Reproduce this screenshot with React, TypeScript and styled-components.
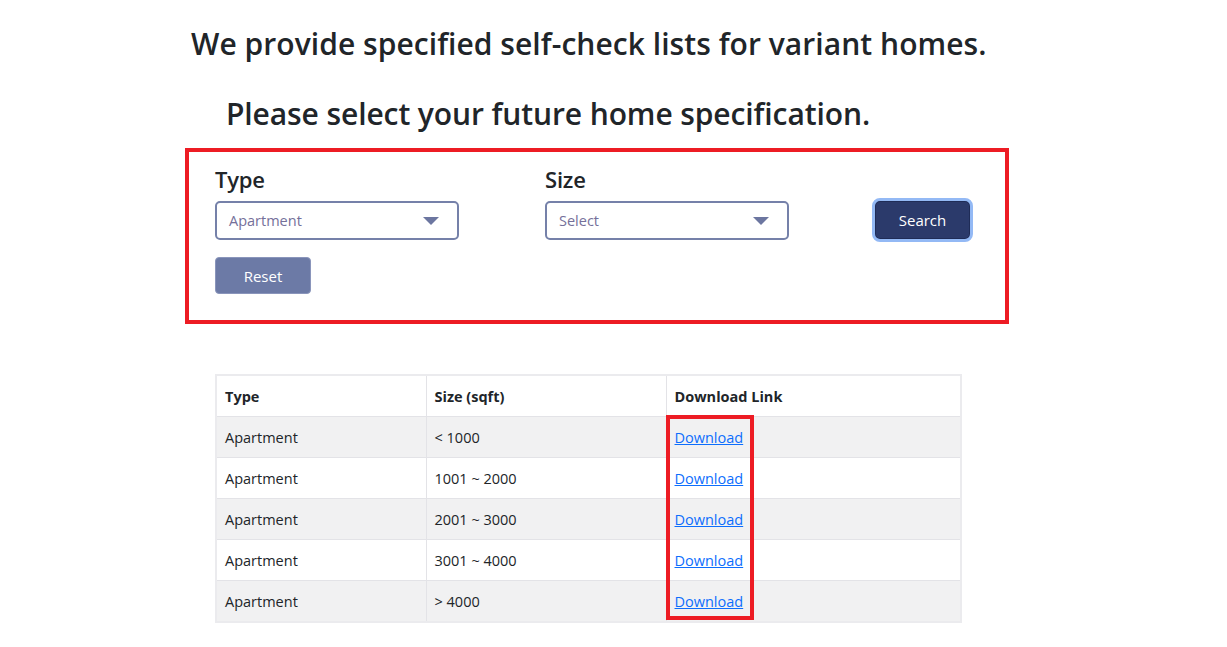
import React from "react";
import styled, { createGlobalStyle } from "styled-components";

const Global = createGlobalStyle`
  html, body { margin: 0; padding: 0; background: #fff; }
  body { font-family: "Open Sans", "Noto Sans", sans-serif; color: #212529; }
`;

const Page = styled.div`
  width: 1227px;
  height: 647px;
  overflow: hidden;
  padding-top: 24px;
  box-sizing: border-box;
`;

const Heading = styled.h1<{ $indent: number; $spacing: number }>`
  margin: 0 0 0 ${(p) => p.$indent}px;
  font-size: 30px;
  font-weight: 600;
  line-height: 40px;
  letter-spacing: ${(p) => p.$spacing}px;
  color: #212529;
  white-space: nowrap;
`;

const Headings = styled.div`
  display: flex;
  flex-direction: column;
  gap: 30px;
`;

const FilterPanel = styled.section`
  margin: 14px 0 0 185px;
  width: 824px;
  height: 176px;
  box-sizing: border-box;
  border: 4px solid #ed1c24;
  padding: 13px 26px 0;
  display: grid;
  grid-template-columns: 244px 86px 244px 83px 101px;
  grid-template-rows: auto auto;
  align-content: start;
  row-gap: 17px;
`;

const Field = styled.div<{ $col: number }>`
  grid-column: ${(p) => p.$col};
  grid-row: 1;
  display: flex;
  flex-direction: column;
  gap: 8px;
`;

const Label = styled.label`
  font-size: 22px;
  font-weight: 600;
  line-height: 28px;
  color: #212529;
  letter-spacing: -0.2px;
`;

const SelectBox = styled.div`
  height: 39px;
  box-sizing: border-box;
  border: 2px solid #7581a9;
  border-radius: 5px;
  display: flex;
  align-items: center;
  justify-content: space-between;
  padding: 0 18px 0 12px;
  font-size: 14.5px;
  color: #75709a;
`;

const Arrow = styled.span`
  width: 0;
  height: 0;
  border-left: 8px solid transparent;
  border-right: 8px solid transparent;
  border-top: 8px solid #6c76a0;
`;

const SearchCell = styled.div`
  grid-column: 5;
  grid-row: 1;
  align-self: end;
  display: flex;
  margin-bottom: -2px;
`;

const SearchButton = styled.button`
  width: 101px;
  height: 44px;
  box-sizing: border-box;
  border: 3px solid #93b9f5;
  border-radius: 8px;
  background: #2b3a6b;
  box-shadow: inset 0 0 0 1px #1f2c57;
  color: #fff;
  font-family: inherit;
  font-size: 15px;
  padding: 0;
`;

const ResetButton = styled.button`
  grid-column: 1;
  grid-row: 2;
  width: 96px;
  height: 37px;
  border: 1px solid #8a95bb;
  border-radius: 4px;
  background: #6c7aa6;
  color: #fff;
  font-family: inherit;
  font-size: 15px;
  padding: 0;
`;

const TableWrap = styled.div`
  position: relative;
  margin: 50px 0 0 215px;
  width: 745px;
`;

const Table = styled.table`
  width: 745px;
  border-collapse: collapse;
  font-size: 14.5px;
  border: 2px solid #ebebee;
  table-layout: fixed;
`;

const Th = styled.th`
  text-align: left;
  font-weight: 700;
  height: 40px;
  padding: 0 8px;
  border: 1px solid #e3e3e7;
  color: #212529;
`;

const Row = styled.tr<{ $odd: boolean }>`
  background: ${(p) => (p.$odd ? "#f1f1f2" : "#fff")};
`;

const Td = styled.td`
  height: 40px;
  padding: 0 8px;
  border: 1px solid #e3e3e7;
  color: #212529;
`;

const Link = styled.a`
  color: #0d6efd;
  text-decoration: underline;
`;

const LinkHighlight = styled.div`
  position: absolute;
  left: 451px;
  top: 41px;
  width: 88px;
  height: 205px;
  box-sizing: border-box;
  border: 4px solid #ed1c24;
  pointer-events: none;
`;

const rows = ["< 1000", "1001 ~ 2000", "2001 ~ 3000", "3001 ~ 4000", "> 4000"];

export default function App() {
  return (
    <Page>
      <Global />
      <Headings>
        <Heading $indent={191} $spacing={0.05}>
          We provide specified self-check lists for variant homes.
        </Heading>
        <Heading $indent={226} $spacing={-0.1}>
          Please select your future home specification.
        </Heading>
      </Headings>
      <FilterPanel>
        <Field $col={1}>
          <Label>Type</Label>
          <SelectBox>
            <span>Apartment</span>
            <Arrow />
          </SelectBox>
        </Field>
        <Field $col={3}>
          <Label>Size</Label>
          <SelectBox>
            <span>Select</span>
            <Arrow />
          </SelectBox>
        </Field>
        <SearchCell>
          <SearchButton>Search</SearchButton>
        </SearchCell>
        <ResetButton>Reset</ResetButton>
      </FilterPanel>
      <TableWrap>
        <Table>
          <colgroup>
            <col style={{ width: 210 }} />
            <col style={{ width: 240 }} />
            <col style={{ width: 295 }} />
          </colgroup>
          <thead>
            <tr>
              <Th>Type</Th>
              <Th>Size (sqft)</Th>
              <Th>Download Link</Th>
            </tr>
          </thead>
          <tbody>
            {rows.map((r, i) => (
              <Row key={r} $odd={i % 2 === 0}>
                <Td>Apartment</Td>
                <Td>{r}</Td>
                <Td>
                  <Link href="#">Download</Link>
                </Td>
              </Row>
            ))}
          </tbody>
        </Table>
        <LinkHighlight />
      </TableWrap>
    </Page>
  );
}
